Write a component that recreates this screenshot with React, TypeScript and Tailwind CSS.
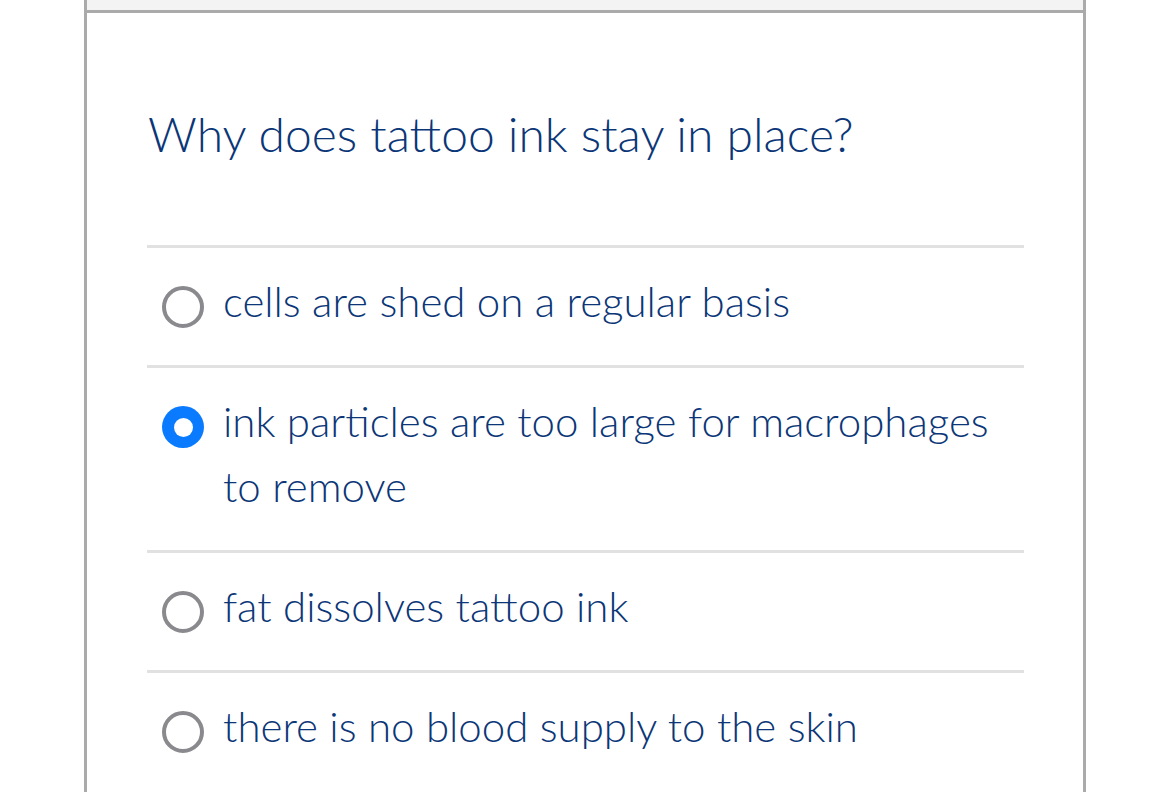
import React from "react";

const options = [
  { text: "cells are shed on a regular basis", selected: false },
  { text: "ink particles are too large for macrophages to remove", selected: true },
  { text: "fat dissolves tattoo ink", selected: false },
  { text: "there is no blood supply to the skin", selected: false },
];

function Radio({ selected }: { selected: boolean }) {
  return selected ? (
    <div className="w-[42px] h-[42px] rounded-full bg-[#0a7aff] flex items-center justify-center shrink-0">
      <div className="w-[19px] h-[19px] rounded-full bg-white" />
    </div>
  ) : (
    <div className="w-[42px] h-[42px] rounded-full border-[4px] border-[#8a8a8e] bg-white shrink-0" />
  );
}

export default function App() {
  return (
    <div className="w-[1170px] h-[792px] bg-white overflow-hidden" style={{ fontFamily: "Lato, 'Noto Sans', sans-serif" }}>
      <div className="ml-[84px] w-[1002px] h-[792px] border-x-[3px] border-[#aaaaaa] flex flex-col">
        <div className="h-[10px] shrink-0 bg-[#f3f3f3] border-b-[3px] border-[#aaaaaa] box-content" />
        <div className="pl-[60px] pr-[59px] shrink-0">
          <h1 className="pl-[1px] pt-[90px] pb-[80px] text-[48px] leading-[62px] text-[#0b3677] font-light">
            Why does tattoo ink stay in place?
          </h1>
          <div className="flex flex-col">
            {options.map((o, i) => (
              <div key={i} className="border-t-[3px] border-[#e1e1e1] flex items-start gap-[19px] pl-[15px] pr-[20px] pt-[21px] pb-[31px]">
                <div className="pt-[17px]">
                  <Radio selected={o.selected} />
                </div>
                <div className="text-[42px] leading-[65px] text-[#0b3677] font-light">{o.text}</div>
              </div>
            ))}
          </div>
        </div>
      </div>
    </div>
  );
}
